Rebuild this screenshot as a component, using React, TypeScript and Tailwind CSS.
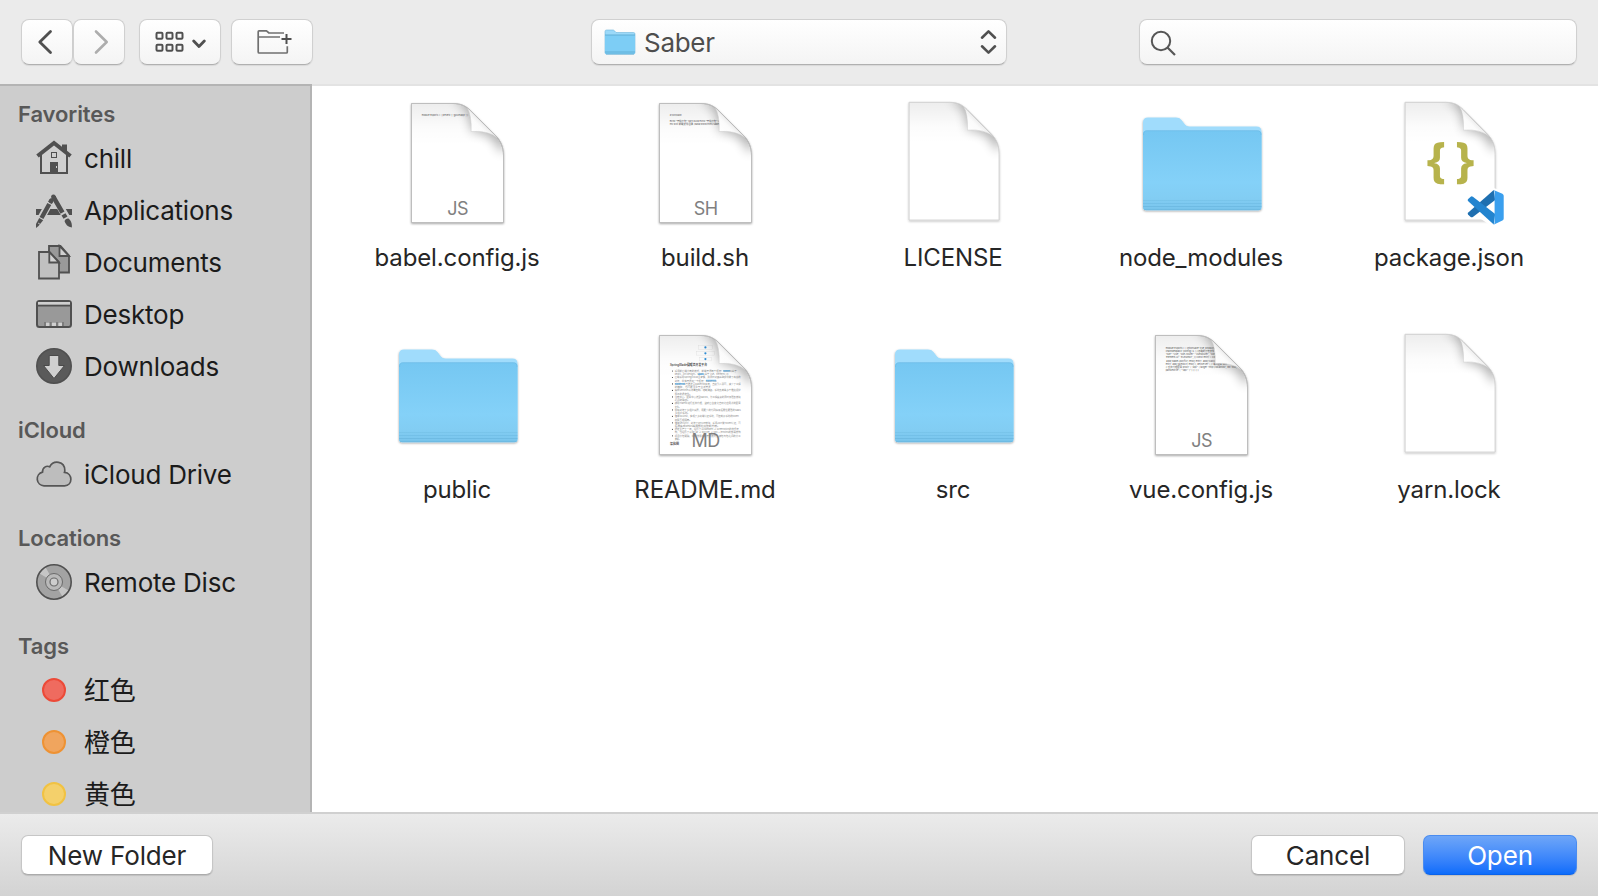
import React from "react";

type FileKind = "folder" | "blank" | "preview" | "json";

interface FileEntry {
  name: string;
  kind: FileKind;
  badge?: string;
  preview?: React.ReactNode;
}

const PAGE =
  "M18.5 5.5H60C68 5.5 73 8 78 13L102.5 37.5C108 43 110.5 49 110.5 58V124.5H18.5Z";

const SMALL_PAGE = "translate(1.9 -1.1) scale(0.98 0.99)";

function Page({ id, small }: { id: string; small?: boolean }) {
  return (
    <g transform={small ? SMALL_PAGE : undefined}>
      <path d={PAGE} fill="#fff" stroke={small ? "#dcdcdc" : "#bcbcbc"} strokeWidth="0.9" filter={`url(#${id}-drop)`} />
    </g>
  );
}

function Fold({ id, small }: { id: string; small?: boolean }) {
  return (
    <g transform={small ? SMALL_PAGE : undefined}>
      <g clipPath={`url(#${id}-clip)`}>
        <path d={PAGE} fill={`url(#${id}-top)`} />
        <path d="M58 2Q78 6 78.2 33.5Q100 33 108 56L118 40L80 0Z" fill="#000" opacity="0.3" filter={`url(#${id}-blur)`} />
        <path d="M74 9.5Q78.8 17 78.2 33.5Q95 32.2 104.5 40Z" fill={`url(#${id}-curl)`} />
        <path d="M74 9.5Q78.8 17 78.2 33.5Q95 32.2 104.5 40" fill="none" stroke="#cfcfcf" strokeWidth="0.5" />
      </g>
      <path d={PAGE} fill="none" stroke={small ? "#d4d4d4" : "#bebebe"} strokeWidth="0.8" />
    </g>
  );
}

function PageDefs({ id, small }: { id: string; small?: boolean }) {
  return (
    <defs>
      <clipPath id={`${id}-clip`}>
        <path d={PAGE} />
      </clipPath>
      <filter id={`${id}-drop`} x="-10%" y="-10%" width="120%" height="120%">
        <feDropShadow dx="0" dy="1" stdDeviation="0.9" floodColor="#000" floodOpacity={small ? 0.22 : 0.35} />
      </filter>
      <filter id={`${id}-blur`} x="-50%" y="-50%" width="200%" height="200%">
        <feGaussianBlur stdDeviation="5.5" />
      </filter>
      <linearGradient id={`${id}-top`} x1="0" y1="0" x2="0" y2="1">
        <stop offset="0" stopColor="#000" stopOpacity="0.07" />
        <stop offset="0.2" stopColor="#000" stopOpacity="0.015" />
        <stop offset="0.35" stopColor="#000" stopOpacity="0" />
      </linearGradient>
      <linearGradient id={`${id}-curl`} gradientUnits="userSpaceOnUse" x1="78" y1="34" x2="90" y2="22">
        <stop offset="0" stopColor="#fff" />
        <stop offset="0.6" stopColor="#fbfbfb" />
        <stop offset="1" stopColor="#e6e6e6" />
      </linearGradient>
    </defs>
  );
}

function CodeLines({ lines }: { lines: { y: number; w: number; t: string }[] }) {
  return (
    <g fill="#555" fontSize="2.7" fontFamily="Inter, 'Noto Sans CJK SC', sans-serif">
      {lines.map((l) => (
        <text key={l.y} x="28.7" y={l.y} textLength={l.w} lengthAdjust="spacingAndGlyphs">
          {l.t}
        </text>
      ))}
    </g>
  );
}

const babelPreview = (
  <CodeLines lines={[{ y: 18.3, w: 46.5, t: "module.exports = { presets: [ '@vue/app' ] }" }]} />
);

const buildPreview = (
  <CodeLines
    lines={[
      { y: 18.1, w: 12, t: "#!/bin/bash" },
      { y: 24.2, w: 51, t: 'echo "开始打包" yarn build echo "开始打包" cd' },
      { y: 27.4, w: 58, t: "mv dist 前端文件目录 /data/www/html/saber/admin" },
    ]}
  />
);

const vuePreview = (
  <CodeLines
    lines={[
      { y: 18.7, w: 50, t: "module.exports = { lintOnSave: true, productio" },
      { y: 21.9, w: 52, t: "chainWebpack: (config) => { //忽略的打包文件 co" },
      { y: 25.2, w: 52, t: "'vue': 'Vue', 'vue-router': 'VueRouter', 'vuex':" },
      { y: 28.4, w: 52, t: "'element-ui': 'ELEMENT', }) const entry = confi" },
      { y: 31.7, w: 52, t: ".add('babel-polyfill').end() entry .add('classlist" },
      { y: 34.9, w: 62, t: "entry .add('@/mock').end() }, devServer: { // 端口配置 port:" },
      { y: 38.2, w: 71, t: "// 反向代理配置 proxy: { '/api': { target: 'http://localhost', ws: true," },
      { y: 41.4, w: 33, t: "pathRewrite: { '^/api': '/' } } } } }" },
    ]}
  />
);

const readmeLines: [string, number, boolean][] = [
  ["采用前后端分离的模式，前端开源两个框架：Sword(基于", 62, true],
  ["React、Ant Design)、Saber (基于 Vue、Element-UI)", 54, false],
  ["后端采用SpringCloud全家桶，并同时对其基础组件做了高度的", 66, true],
  ["封装，单独开源出一个框架：BladeTool", 42, false],
  ["BladeTool已推送至Maven中央库，直接引入即可，减少了工程", 66, true],
  ["的臃肿，也可更注重于业务开发", 36, false],
  ["集成Sentinel从流量控制、熔断降级、系统负载等多个维度保护", 66, true],
  ["服务的稳定性。", 17, false],
  ["注册中心、配置中心选型Nacos，为工程瘦身的同时加强各模块", 66, true],
  ["之间的联动。", 15, false],
  ["使用Traefik进行反向代理，监听后台变化自动化应用新的配置", 66, true],
  ["文件。", 6, false],
  ["极简封装了多租户底层，用更少的代码换来拓展性更强的SaaS", 66, true],
  ["多租户系统。", 15, false],
  ["借鉴OAuth2，实现了多终端认证系统，可控制子系统的token", 64, true],
  ["权限互相隔离。", 17, false],
  ["借鉴Security，封装了Secure模块，采用JWT做Token认证，可", 66, true],
  ["拓展集成Redis等细颗粒度控制方案。", 45, false],
  ["稳定生产了一年，经历了从Camden -> Greenwich的技术架", 64, true],
  ["构，也经历了从fat jar -> docker -> k8s + jenkins的部署架构", 66, false],
  ["项目分包明确，规范微服务的开发模式，使包与包之间的分工", 66, true],
  ["清晰。", 6, false],
];

const readmePreview = (
  <g fontFamily="Inter, 'Noto Sans CJK SC', sans-serif" fontSize="2.5" fill="#8a8a8a">
    {[17.4, 23.3, 29.1].map((y, i) => (
      <g key={y}>
        <rect x={[57.5, 55.5, 58.5][i]} y={y - 1.8} width={[14, 18, 12][i]} height="3.6" fill="none" stroke="#e3e3e3" strokeWidth="0.4" />
        <circle cx="64.4" cy={y} r="1.1" fill="#2f8fd8" />
      </g>
    ))}
    <text x="29" y="35.7" fontSize="2.9" fontWeight="600" fill="#444" textLength="37" lengthAdjust="spacingAndGlyphs">
      SpringBlade微服务开发平台
    </text>
    {readmeLines.map(([t, w, bullet], i) => (
      <g key={t}>
        {bullet && <circle cx="31.5" cy={41 + i * 3.24} r="0.6" fill="#444" />}
        <text x="33.7" y={41.9 + i * 3.24} textLength={w} lengthAdjust="spacingAndGlyphs">
          {t}
        </text>
      </g>
    ))}
    <g fill="#2b9be8" opacity="0.5">
      <rect x="82" y="40" width="7" height="1.7" />
      <rect x="57" y="43.3" width="6" height="1.7" />
      <rect x="65" y="49.7" width="10" height="1.7" />
      <rect x="34" y="53" width="10" height="1.7" />
    </g>
    <text x="29" y="115.4" fontSize="2.9" fontWeight="600" fill="#555" textLength="9" lengthAdjust="spacingAndGlyphs">
      架构图
    </text>
  </g>
);

function FolderArt({ id }: { id: string }) {
  return (
    <svg viewBox="-1 0 128 128" className="size-32">
      <defs>
        <linearGradient id={`${id}-f`} x1="0" y1="0" x2="0" y2="1">
          <stop offset="0" stopColor="#75c7f2" />
          <stop offset="0.65" stopColor="#84d1f8" />
          <stop offset="0.85" stopColor="#82cdf3" />
          <stop offset="1" stopColor="#78c4ec" />
        </linearGradient>
        <filter id={`${id}-s`} x="-10%" y="-10%" width="120%" height="120%">
          <feDropShadow dx="0" dy="1" stdDeviation="0.8" floodColor="#000" floodOpacity="0.38" />
        </filter>
      </defs>
      <path
        d="M5 24.5Q5 19.6 10 19.6H38Q41.5 19.6 43.5 22L47 26.5Q48.5 28.6 51.5 28.6H118.5Q123.5 28.6 123.5 33.5V109Q123.5 112.3 120.5 112.3H8Q5 112.3 5 109Z"
        fill="#a0dcfc"
        filter={`url(#${id}-s)`}
      />
      <path d="M5 36Q5 32.5 9 32.5H119.5Q123.5 32.5 123.5 36V109Q123.5 112.3 120.5 112.3H8Q5 112.3 5 109Z" fill={`url(#${id}-f)`} />
      <path d="M5.500 37Q5.500 32.700 9 32.700H119.500Q123 32.700 123 37" fill="none" stroke="#69b7e0" strokeWidth="0.5" />
      <g stroke="#62aed8" strokeWidth="0.8" opacity="0.65">
        <path d="M5 102.500H123.500" opacity="0.5" />
        <path d="M5 105.500H123.500" opacity="0.7" />
        <path d="M5 108.500H123.500" />
        <path d="M6 111.400H122.500" />
      </g>
    </svg>
  );
}

function CodeBadge() {
  return (
    <g transform="translate(-0.8 -0.5)">
      <path d="M109 92L119 95.500V123.500L109 128L84 111V101Z" fill="#fff" stroke="#fff" strokeWidth="3" strokeLinejoin="round" />
      <path d="M109.500 92.500L83.800 115.300Q83 116.300 84 117.300L86.500 119.600Q87.500 120.200 88.700 119.400L111 102.500Z" fill="#1e6fb0" />
      <path d="M109.500 127L83.800 103.500Q83 102.500 84 101.500L86.500 99.200Q87.500 98.500 88.700 99.300L111 116.500Z" fill="#2384cf" />
      <path d="M109.300 92.400L118.200 96.200Q119.500 97 119.500 98.300V121Q119.500 122.400 118.200 123.100L109.300 127.200Q110.400 126.500 110.400 124.800V94.500Q110.400 93 109.300 92.400Z" fill="#3a9fee" />
    </g>
  );
}

function FileArt({ file, id }: { file: FileEntry; id: string }) {
  if (file.kind === "folder") return <FolderArt id={id} />;
  const small = file.kind !== "preview";
  return (
    <svg viewBox="0 0 128 128" className="size-32 overflow-visible">
      <PageDefs id={id} small={small} />
      <Page id={id} small={small} />
      <g clipPath={`url(#${id}-clip)`}>{file.preview}</g>
      <Fold id={id} small={small} />
      {file.badge && (
        <text x="64.600" y="117.300" textAnchor="middle" fontSize="18" fill="#808080" fontFamily="Inter, sans-serif" letterSpacing="-0.5">
          {file.badge}
        </text>
      )}
      {file.kind === "json" && (
        <>
          <g fontFamily="'Open Sans', sans-serif" fontWeight="700" fontSize="49" fill="#b7b34c" textAnchor="middle">
            <text x="51.500" y="79.300">{"{"}</text>
            <text x="79.600" y="79.300">{"}"}</text>
          </g>
          <CodeBadge />
        </>
      )}
    </svg>
  );
}

const files: FileEntry[] = [
  { name: "babel.config.js", kind: "preview", badge: "JS", preview: babelPreview },
  { name: "build.sh", kind: "preview", badge: "SH", preview: buildPreview },
  { name: "LICENSE", kind: "blank" },
  { name: "node_modules", kind: "folder" },
  { name: "package.json", kind: "json" },
  { name: "public", kind: "folder" },
  { name: "README.md", kind: "preview", badge: "MD", preview: readmePreview },
  { name: "src", kind: "folder" },
  { name: "vue.config.js", kind: "preview", badge: "JS", preview: vuePreview },
  { name: "yarn.lock", kind: "blank" },
];

const HomeIcon = () => (
  <svg viewBox="0 0 36 36" className="size-9" fill="none" stroke="#505050">
    <path d="M5 14V33H31V14L18 4Z" fill="#d0d0d0" stroke="none" />
    <path d="M5 14V33H31V14" strokeWidth="2" />
    <path d="M26 4.500H31V12L26 8Z" fill="#505050" stroke="none" />
    <path d="M1.500 16L18 3L34.500 16" strokeWidth="4" />
    <rect x="15.500" y="12.500" width="5" height="5" strokeWidth="1" />
    <path d="M14 22H22V33H14Z" fill="#505050" stroke="none" />
    <path d="M20.500 26V28" stroke="#d0d0d0" />
  </svg>
);

const AppsIcon = () => (
  <svg viewBox="0 0 36 36" className="size-9" fill="none">
    <path d="M0 17H36V23H0Z" fill="#505050" />
    <path d="M15 8L3 30M18 4L33 30" stroke="#cdcdcd" strokeWidth="7.500" />
    <path d="M16 17H19L22 23H12.500Z" fill="#505050" />
    <path d="M15.300 8.500L14 10.800M13.300 12L5.500 26" stroke="#505050" strokeWidth="4.400" />
    <path d="M15.300 8.500L14.900 9.200" stroke="#505050" strokeWidth="4.400" strokeLinecap="round" />
    <path d="M3.200 26L7.200 28.200L2.500 34L0 36V32Z" fill="#505050" />
    <path d="M2 31L4 32.200" stroke="#cdcdcd" strokeWidth="0.800" />
    <path d="M17.400 4.800L26.500 20.600M27.500 22.300L29.500 25.700" stroke="#505050" strokeWidth="4.600" />
    <path d="M17.400 4.800L17.900 5.700" stroke="#505050" strokeWidth="4.600" strokeLinecap="round" />
    <path d="M28.500 29Q29.500 26 32.500 26.500Q36.500 30 35.800 35.500Q30 34.500 28.500 29Z" fill="#505050" />
  </svg>
);

const DocsIcon = () => (
  <svg viewBox="0 0 36 36" className="size-9" stroke="#505050" strokeWidth="1.800">
    <path d="M13 2H24.500L33 11.500V28.500H13Z" fill="#999" />
    <path d="M23.500 2V12H33Z" fill="#cfcfcf" />
    <path d="M3 8H13.500L23 18V34.500H3Z" fill="#c0c0c0" />
    <path d="M13.300 8V18.500H23Z" fill="#d2d2d2" />
  </svg>
);

const DesktopIcon = () => (
  <svg viewBox="0 0 36 36" className="size-9">
    <rect x="1" y="5" width="34" height="26" rx="2.500" fill="#999" stroke="#505050" strokeWidth="2" />
    <path d="M2 6H34V8.800H2Z" fill="#d0d0d0" />
    <path d="M1 9.700H35" stroke="#505050" strokeWidth="1.800" />
    <path d="M8 26H28V30H8Z" fill="#7c7c7c" />
    <path d="M10 26.500H13.500V30H10ZM15.800 26.500H20V30H15.800ZM22.300 26.500H26V30H22.300Z" fill="#d0d0d0" />
  </svg>
);

const DownloadsIcon = () => (
  <svg viewBox="0 0 36 36" className="size-9">
    <circle cx="18" cy="18" r="17.200" fill="#5a5a5a" stroke="#505050" strokeWidth="1.600" />
    <path d="M13.200 7.500H22.800V17.500H28.500L18 30.500L7.500 17.500H13.200Z" fill="#cfcfcf" stroke="#4a4a4a" strokeWidth="1" />
  </svg>
);

const CloudIcon = () => (
  <svg viewBox="0 0 36 36" className="size-9">
    <path
      d="M8 29.800A6.900 6.900 0 0 1 6.500 16.200C6.300 11.500 10.500 9.200 13.700 10.800C17.500 3.600 28.600 5 28.800 14.200C28.800 15 28.700 15.800 28.500 16.300C37 17 37 29.800 28.500 29.800Z"
      fill="#bdbdbd"
      stroke="#565656"
      strokeWidth="1.700"
    />
  </svg>
);

const DiscIcon = () => (
  <svg viewBox="0 0 36 36" className="size-9">
    <circle cx="18" cy="18" r="17.200" fill="#a3a3a3" />
    <path d="M18 18L3.500 9.500A17 17 0 0 1 9.500 3.300ZM18 18L32.500 26.500A17 17 0 0 1 26.500 32.700Z" fill="#c6c6c6" />
    <circle cx="18" cy="18" r="17.200" fill="none" stroke="#505050" strokeWidth="1.600" />
    <circle cx="18" cy="18" r="8.500" fill="#b9b9b9" stroke="#6a6a6a" strokeWidth="1" />
    <circle cx="18" cy="18" r="4" fill="#cdcdcd" stroke="#6a6a6a" strokeWidth="1.200" />
  </svg>
);

const TagDot = ({ className }: { className: string }) => (
  <span className={`mx-1.5 size-6 rounded-full border-2 ${className}`} />
);

const sections = [
  {
    title: "Favorites",
    head: "h-[46px] pt-2.5",
    items: [
      { label: "chill", icon: <HomeIcon /> },
      { label: "Applications", icon: <AppsIcon /> },
      { label: "Documents", icon: <DocsIcon /> },
      { label: "Desktop", icon: <DesktopIcon /> },
      { label: "Downloads", icon: <DownloadsIcon /> },
    ],
  },
  { title: "iCloud", head: "h-14 pt-5", items: [{ label: "iCloud Drive", icon: <CloudIcon /> }] },
  { title: "Locations", head: "h-14 pt-5", items: [{ label: "Remote Disc", icon: <DiscIcon /> }] },
  {
    title: "Tags",
    head: "h-14 pt-5",
    items: [
      { label: "红色", icon: <TagDot className="border-[#ec4a38] bg-[#ef6b5f]" /> },
      { label: "橙色", icon: <TagDot className="border-[#ee9233] bg-[#f0a55e]" /> },
      { label: "黄色", icon: <TagDot className="border-[#f1c242] bg-[#f4d06b]" /> },
    ],
  },
];

const field =
  "flex h-[46px] items-center rounded-[8px] border border-[#d0d0d0] border-b-[#b0b0b0] bg-linear-to-b from-white to-[#f4f4f4] shadow-[0_1px_1px_rgba(0,0,0,0.08)]";

function Toolbar() {
  return (
    <header className="flex h-[84px] shrink-0 items-start bg-[#ebebeb] pt-[19px] pl-[21px]">
      <button className={`${field} w-[52px] justify-center`}>
        <svg viewBox="0 0 24 28" className="mr-1 h-7 w-6" fill="none" stroke="#505050" strokeWidth="2.800" strokeLinecap="round" strokeLinejoin="round">
          <path d="M17.500 3.500L6.800 14L17.500 24.500" />
        </svg>
      </button>
      <button className={`${field} w-[52px] justify-center`}>
        <svg viewBox="0 0 24 28" className="ml-1 h-7 w-6" fill="none" stroke="#adadad" strokeWidth="2.600" strokeLinecap="round" strokeLinejoin="round">
          <path d="M7 3.500L17.700 14L7 24.500" />
        </svg>
      </button>
      <button className={`${field} ml-3.5 w-[82px] justify-center`}>
        <svg viewBox="0 0 52 24" className="h-6 w-[52px]" fill="none" stroke="#505050">
          <g strokeWidth="2">
            {[3, 13, 23].map((x) =>
              [3, 15].map((y) => <rect key={`${x}-${y}`} x={x - 0.5} y={y - 0.3} width="6" height="6" rx="1" />),
            )}
          </g>
          <path d="M39.700 11L45 16.500L50.300 11" strokeWidth="2.800" strokeLinecap="round" strokeLinejoin="round" />
        </svg>
      </button>
      <button className={`${field} ml-2.5 w-[82px] justify-center`}>
        <svg viewBox="0 0 36 26" className="ml-1 h-[26px] w-9" fill="none" stroke="#707070" strokeWidth="1.700" strokeLinejoin="round">
          <path d="M28 4H13L10.500 1.800H3Q2.200 1.800 2.200 2.800V23Q2.200 24 3.200 24H30.300Q31.300 24 31.300 23V17.200" />
          <path d="M2.200 8H24" strokeWidth="1.500" />
          <path d="M30.500 5V15M25.500 10H35.500" stroke="#505050" strokeWidth="2" />
        </svg>
      </button>
      <div className={`${field} ml-[278px] w-[416px] justify-between pr-[9px] pl-3 text-[26px] text-[#4e4e4e]`}>
        <div className="flex items-center">
          <svg viewBox="0 0 32 28" className="mr-2 h-7 w-8">
            <path d="M1 3.500Q1 2 2.500 2H9Q10 2 10.700 3L12 4.500H29.500Q31 4.500 31 6V24.500Q31 26 29.500 26H2.500Q1 26 1 24.500Z" fill="#9bd9f9" stroke="#6fb6dc" strokeWidth="0.600" />
            <path d="M1 7H31V24.500Q31 26 29.500 26H2.500Q1 26 1 24.500Z" fill="#7dcdf5" />
            <path d="M1 7H31M1 24H31M2 26H30" stroke="#5fabd3" strokeWidth="0.900" />
          </svg>
          <span className="pt-px tracking-[-0.3px]">Saber</span>
        </div>
        <svg viewBox="0 0 18 28" className="h-7 w-[18px]" fill="none" stroke="#505050" strokeWidth="2.600" strokeLinecap="round" strokeLinejoin="round">
          <path d="M3 9.700L9.500 3.400L16 9.700M3 18.300L9.500 24.600L16 18.300" />
        </svg>
      </div>
      <div className={`${field} ml-[132px] w-[438px] pl-2.5`}>
        <svg viewBox="0 0 28 28" className="size-7" fill="none" stroke="#565656" strokeWidth="2">
          <circle cx="11" cy="13" r="9.200" />
          <path d="M17.500 19.500L25 27" strokeWidth="2.200" />
        </svg>
      </div>
    </header>
  );
}

function Sidebar() {
  return (
    <aside className="w-[312px] shrink-0 overflow-hidden border-t-2 border-r-2 border-[#b4b4b4] bg-[#cdcdcd]">
      {sections.map((s) => (
        <section key={s.title}>
          <h2 className={`pl-[18px] text-[22px] leading-9 font-semibold tracking-[-0.1px] text-[#585858] ${s.head}`}>{s.title}</h2>
          {s.items.map((it) => (
            <div key={it.label} className="flex h-[52px] items-center pl-9 text-[26px] text-[#1b1b1b]">
              {it.icon}
              <span className="ml-3 tracking-[-0.22px]">{it.label}</span>
            </div>
          ))}
        </section>
      ))}
    </aside>
  );
}

export default function App() {
  return (
    <div className="flex h-[896px] w-[1598px] flex-col overflow-hidden bg-white font-[Inter,'Noto_Sans_CJK_SC',sans-serif]">
      <Toolbar />
      <div className="flex h-[728px] shrink-0">
        <Sidebar />
        <main className="grow border-t-2 border-[#e3e3e3] pt-3 pl-[21px]">
          <div className="grid w-[1240px] grid-cols-5">
            {files.map((f, i) => (
              <div key={f.name} className="flex h-[232px] flex-col items-center">
                <FileArt file={f} id={`file${i}`} />
                <span className="mt-3.5 text-[24px] leading-9 tracking-[-0.13px] text-[#262626]">{f.name}</span>
              </div>
            ))}
          </div>
        </main>
      </div>
      <footer className="flex h-[84px] shrink-0 items-start border-t-2 border-[#d0d0d0] bg-linear-to-b from-[#ebebeb] to-[#d3d3d3] pt-[21px] pl-[21px] text-[26px] tracking-[-0.15px] text-[#262626]">
        <button className="flex h-10 w-48 items-center justify-center rounded-[7px] border border-[#c6c6c6] border-b-[#ababab] bg-white shadow-[0_1px_1px_rgba(0,0,0,0.12)]">
          New Folder
        </button>
        <button className="ml-[1038px] flex h-10 w-[154px] items-center justify-center rounded-[7px] border border-[#c6c6c6] border-b-[#ababab] bg-white shadow-[0_1px_1px_rgba(0,0,0,0.12)]">
          Cancel
        </button>
        <button className="ml-[18px] flex h-10 w-[154px] items-center justify-center rounded-[7px] border border-[#4a8cf0] border-b-[#0a62ea] bg-linear-to-b from-[#6ea6f8] to-[#0a6cfb] text-white shadow-[0_1px_1px_rgba(0,0,0,0.12)]">
          Open
        </button>
      </footer>
    </div>
  );
}
